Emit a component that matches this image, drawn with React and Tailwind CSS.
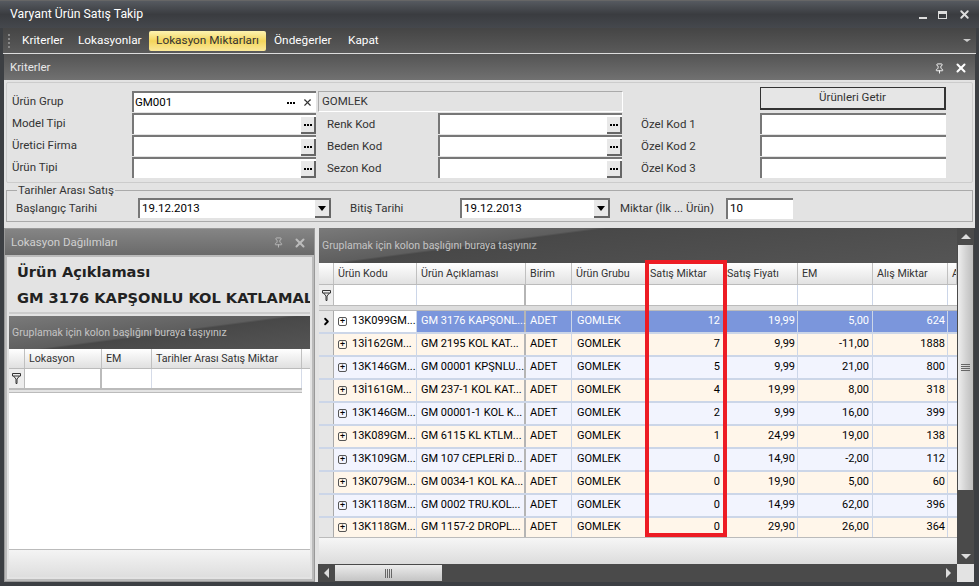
import React from "react";
import { ChevronRight, Pin, X } from "lucide-react";

const font = "font-['Roboto','Noto_Sans',sans-serif]";

const rows = [
  ["13K099GM...", "GM 3176 KAPŞONL...", "12", "19,99", "5,00", "624"],
  ["13İ162GM...", "GM 2195 KOL KAT...", "7", "9,99", "-11,00", "1888"],
  ["13K146GM...", "GM 00001 KPŞNLU...", "5", "9,99", "21,00", "800"],
  ["13İ161GM...", "GM 237-1 KOL KAT...", "4", "19,99", "8,00", "318"],
  ["13K146GM...", "GM 00001-1 KOL K...", "2", "9,99", "16,00", "399"],
  ["13K089GM...", "GM 6115 KL KTLM...", "1", "24,99", "19,00", "138"],
  ["13K109GM...", "GM 107 CEPLERİ D...", "0", "14,90", "-2,00", "112"],
  ["13K079GM...", "GM 0034-1 KOL KA...", "0", "19,90", "5,00", "60"],
  ["13K118GM...", "GM 0002 TRU.KOL...", "0", "14,99", "62,00", "396"],
  ["13K118GM...", "GM 1157-2 DROPL...", "0", "29,90", "26,00", "364"],
];

const Dots = () => (
  <span className="flex gap-[1px]">
    <i className="w-[2px] h-[2px] bg-black" />
    <i className="w-[2px] h-[2px] bg-black" />
    <i className="w-[2px] h-[2px] bg-black" />
  </span>
);

const Field = ({ value, lookup = true, className = "w-[184px]" }) => (
  <div className={`${className} h-[21px] bg-white border-t-2 border-l-2 border-t-[#777] border-l-[#777] flex items-end justify-between text-[11.5px] text-black pl-[1px]`}>
    <span>{value}</span>
    {lookup && (
      <span className="w-[15px] h-[17px] bg-[#e8e8e8] border-r-2 border-b-2 border-[#666] flex items-center justify-center">
        <Dots />
      </span>
    )}
  </div>
);

const DateField = ({ value, className }) => (
  <div className={`${className} h-[20px] bg-white border-t-2 border-l-2 border-t-[#777] border-l-[#777] flex items-center justify-between text-[11.5px] text-black pl-[2px]`}>
    <span>{value}</span>
    <span className="w-[16px] h-[18px] bg-[#e8e8e8] border-r-2 border-b-2 border-[#666] flex items-center justify-center">
      <i className="w-0 h-0 border-x-[4px] border-x-transparent border-t-[5px] border-t-black" />
    </span>
  </div>
);

const Label = ({ children, className = "" }) => (
  <span className={`${className} text-[11.5px] text-[#333] leading-[21px] whitespace-nowrap`}>{children}</span>
);

const PanelHead = ({ title, dim }) => (
  <div className={`h-[26px] shrink-0 flex items-center justify-between pl-[6px] pr-[7px] ${dim ? "pt-[1px] bg-gradient-to-b from-[#858585] to-[#6a6a6a] text-[#d0d0d0]" : "pt-[2px] bg-gradient-to-b from-[#545454] to-[#717171] text-[#e8e8e8]"} text-[11.5px]`}>
    <span>{title}</span>
    <span className="flex items-center gap-[9px]">
      <Pin size={11} strokeWidth={2} className={dim ? "text-[#bbb]" : "text-white"} />
      <X size={14} strokeWidth={3.5} className={dim ? "text-[#bbb]" : "text-white"} />
    </span>
  </div>
);

const Band = ({ className = "" }) => (
  <div className={`${className} shrink-0 flex items-end pl-[3px] text-[10.5px] leading-[14px] text-[#c4c4c4] bg-[linear-gradient(172.5deg,#7a7a7a_0,#5e5e5e_36px,#484848_38px,#555_100%)]`}>
    Gruplamak için kolon başlığını buraya taşıyınız
  </div>
);

const FilterIcon = () => (
  <svg width="9" height="11" viewBox="0 0 9 11" fill="none" stroke="#333" strokeWidth="1">
    <path d="M.5.5h8v2.500h-8zM1.500 3l2.500 3v4.500h1V6l2.500-3" />
  </svg>
);

const HCell = ({ children, className = "" }) => (
  <div className={`${className} h-full flex items-center pl-[4px] pt-[1px] border-r border-[#c0c0c0] text-[10.7px] text-[#333] whitespace-nowrap overflow-hidden`}>
    {children}
  </div>
);

const LocationPanel = () => (
  <section className="w-[311px] shrink-0 flex flex-col bg-[#e3e3e3] border border-[#999]">
    <PanelHead title="Lokasyon Dağılımları" dim />
    <div className="flex-1 flex flex-col px-[2px] pb-[2px] min-h-0 border-2 border-[#bbb]">
      <div className="h-[57px] shrink-0 pl-[8px] pt-[2px] overflow-hidden whitespace-nowrap border-b-2 border-[#ccc] font-['DejaVu_Sans',sans-serif] font-bold text-[#222]">
        <p className="text-[14.6px] leading-[26px]">Ürün Açıklaması</p>
        <p className="text-[14.6px] leading-[26px]">GM 3176 KAPŞONLU KOL KATLAMAL</p>
      </div>
      <div className="flex-1 flex flex-col mt-[2px] bg-white min-h-0">
        <Band className="h-[33px] pb-[9px]" />
        <div className="h-[20px] shrink-0 flex bg-gradient-to-b from-white to-[#e0e0e0] border-b border-[#bbb]">
          <HCell className="w-[16px]" />
          <HCell className="w-[77px]">Lokasyon</HCell>
          <HCell className="w-[50px]">EM</HCell>
          <HCell className="w-[150px]">Tarihler Arası Satış Miktar</HCell>
        </div>
        <div className="h-[21px] shrink-0 w-[293px] flex border-b-2 border-[#bbb]">
          <div className="w-[16px] bg-[#ededed] border-r border-[#bbb] flex items-center justify-center"><FilterIcon /></div>
          <div className="w-[77px] border-r-2 border-[#bbb]" />
          <div className="w-[50px] border-r border-[#d5dbe8]" />
          <div className="flex-1 border-r border-[#d5dbe8]" />
        </div>
        <div className="h-[3px] shrink-0 w-[293px] bg-[#e3e3e3] border-b border-[#bbb]" />
        <div className="flex-1" />
        <div className="h-[28px] shrink-0 bg-gradient-to-b from-[#f4f4f4] to-[#dedede] border-t border-[#bbb]" />
      </div>
    </div>
  </section>
);

const Grip = ({ vertical }) =>
  vertical ? (
    <>
      <i className="w-[9px] h-[1px] bg-[#666]" />
      <i className="w-[9px] h-[1px] bg-[#666]" />
      <i className="w-[9px] h-[1px] bg-[#666]" />
      <i className="w-[9px] h-[1px] bg-[#666]" />
    </>
  ) : (
    <>
      <i className="w-[1px] h-[9px] bg-[#666]" />
      <i className="w-[1px] h-[9px] bg-[#666]" />
      <i className="w-[1px] h-[9px] bg-[#666]" />
      <i className="w-[1px] h-[9px] bg-[#666]" />
    </>
  );

const Scroll = ({ horizontal }) =>
  horizontal ? (
    <div className="h-[18px] shrink-0 flex items-center bg-[#4a4a4a] ml-[1px]">
      <span className="w-[17px] flex justify-center"><i className="w-0 h-0 border-y-[5px] border-y-transparent border-r-[5px] border-r-[#ddd]" /></span>
      <div className="w-[107px] h-[16px] bg-gradient-to-b from-[#ececec] to-[#c4c4c4] flex items-center justify-center gap-[1px]">
        <Grip />
      </div>
      <span className="flex-1" />
      <span className="w-[17px] flex justify-center"><i className="w-0 h-0 border-y-[5px] border-y-transparent border-l-[5px] border-l-[#ddd]" /></span>
      <span className="w-[17px] h-full bg-[#e3e3e3]" />
    </div>
  ) : (
    <div className="w-[17px] shrink-0 flex flex-col bg-[#4a4a4a]">
      <span className="h-[17px] flex items-center justify-center"><i className="w-0 h-0 border-x-[5px] border-x-transparent border-b-[5px] border-b-[#ddd]" /></span>
      <div className="h-[245px] mx-[1px] bg-[linear-gradient(90deg,#eee,#d4d4d4_50%,#bdbdbd)] flex flex-col items-center justify-center gap-[1px]">
        <Grip vertical />
      </div>
      <span className="flex-1" />
      <span className="h-[16px] flex items-center justify-center"><i className="w-0 h-0 border-x-[5px] border-x-transparent border-t-[5px] border-t-[#ddd]" /></span>
    </div>
  );

const Row = ({ row, i }) => {
  const sel = i === 0;
  const last = i === rows.length - 1;
  const tint = sel ? "bg-[#7b96dc] text-white" : i % 2 ? "bg-[#fff6ea] text-black" : "bg-[#f2f4fe] text-black";
  const code = sel ? "bg-white text-black" : tint;
  return (
    <div className={`${last ? "h-[19px]" : "h-[23px] border-b-2 border-[#ccd6e8]"} shrink-0 flex text-[11px]`}>
      <div className="w-[15px] bg-[#e6e6e6] border-r border-[#aaa] flex items-center justify-center text-black">
        {sel && <ChevronRight size={11} strokeWidth={4} />}
      </div>
      <div className={`w-[83px] flex items-center gap-[5px] pl-[4px] border-r border-[#ccd6e8] whitespace-nowrap ${code}`}>
        <span className="w-[9px] h-[9px] shrink-0 border border-[#555] rounded-[2px] flex items-center justify-center text-[9px] leading-none">+</span>
        <span>{row[0]}</span>
      </div>
      <div className={`w-[109px] flex items-center pl-[4px] border-r-2 border-[#b5b5b5] whitespace-nowrap ${tint}`}>
        <span>{row[1]}</span>
      </div>
      <div className={`w-[46px] flex items-center pl-[4px] border-r border-[#ccd6e8] ${tint}`}>ADET</div>
      <div className={`w-[74px] flex items-center pl-[5px] border-r border-[#ccd6e8] ${tint}`}>GOMLEK</div>
      <div className={`w-[79px] flex items-center justify-end pr-[4px] border-r border-[#ccd6e8] ${tint}`}>{row[2]}</div>
      <div className={`w-[73px] flex items-center justify-end pr-[2px] border-r border-[#ccd6e8] ${tint}`}>{row[3]}</div>
      <div className={`w-[75px] flex items-center justify-end pr-[3px] border-r border-[#ccd6e8] ${tint}`}>{row[4]}</div>
      <div className={`w-[75px] flex items-center justify-end pr-[2px] border-r border-[#ccd6e8] ${tint}`}>{row[5]}</div>
      <div className={`flex-1 ${tint}`} />
    </div>
  );
};

const GridPanel = () => (
  <section className="flex-1 flex flex-col bg-[#e3e3e3] min-w-0 relative">
    <div className="flex-1 flex min-h-0">
      <div className="flex-1 flex flex-col min-w-0 pl-[2px]">
        <Band className="h-[35px] pb-[10px]" />
        <div className="h-[22px] flex shrink-0 bg-gradient-to-b from-white to-[#e2e2e2] border-b border-[#bbb]">
          <HCell className="w-[15px]" />
          <HCell className="w-[83px]">Ürün Kodu</HCell>
          <HCell className="w-[109px]">Ürün Açıklaması</HCell>
          <HCell className="w-[46px]">Birim</HCell>
          <HCell className="w-[74px]">Ürün Grubu</HCell>
          <HCell className="w-[79px]">Satış Miktar</HCell>
          <HCell className="w-[73px] !pl-[2px]">Satış Fiyatı</HCell>
          <HCell className="w-[75px]">EM</HCell>
          <HCell className="w-[75px]">Alış Miktar</HCell>
          <HCell className="flex-1">A</HCell>
        </div>
        <div className="h-[20px] flex shrink-0 bg-white">
          <div className="w-[15px] bg-[#ededed] border-r border-[#bbb] flex items-center justify-center"><FilterIcon /></div>
          <div className="w-[83px] border-r border-[#ccd6e8]" />
          <div className="w-[109px] border-r-2 border-[#b5b5b5]" />
          <div className="w-[46px] border-r border-[#ccd6e8]" />
          <div className="w-[74px] border-r border-[#ccd6e8]" />
          <div className="w-[79px] border-r border-[#ccd6e8]" />
          <div className="w-[73px] border-r border-[#ccd6e8]" />
          <div className="w-[75px] border-r border-[#ccd6e8]" />
          <div className="w-[75px] border-r border-[#ccd6e8]" />
        </div>
        <div className="h-[6px] shrink-0 bg-[#ddd] border-y border-[#bbb]" />
        {rows.map((row, i) => <Row key={i} row={row} i={i} />)}
        <div className="flex-1 bg-gradient-to-b from-[#f6f6f6] to-[#dcdcdc] border-t border-[#bbb]" />
      </div>
      <Scroll />
    </div>
    <Scroll horizontal />
    <div className="absolute left-[328px] top-[32px] w-[82px] h-[277px] border-[4px] border-[#ed1c24]" />
  </section>
);

const App = () => (
  <div className={`${font} w-[979px] h-[586px] overflow-hidden flex flex-col bg-[#3c3f43]`}>
    <header className="h-[28px] shrink-0 flex items-center justify-between pl-[10px] pr-[8px] bg-gradient-to-b from-[#565a60] via-[#3a3c40] to-[#45484d] text-[12.3px] text-white border-t border-[#666]">
      <span>Varyant Ürün Satış Takip</span>
      <span className="flex items-center gap-[11px] text-white">
        <i className="w-[8px] h-[2px] bg-[#ddd] mt-[6px]" />
        <i className="w-[9px] h-[8px] border border-t-[3px] border-[#ddd]" />
        <X size={13} strokeWidth={3.5} className="text-[#ddd]" />
      </span>
    </header>
    <div className="flex-1 flex flex-col px-[3px] min-h-0">
      <nav className="h-[26px] shrink-0 flex items-center bg-gradient-to-b from-[#454545] to-[#5a5a5a] border-b border-[#ddd] pl-[5px] pr-[3px] text-[11.8px] text-white whitespace-nowrap">
        <span className="w-[2px] h-[14px] mr-[5px] border-l-2 border-dotted border-[#888]" />
        <span className="w-[56px] pl-[7px]">Kriterler</span>
        <span className="w-[78px] pl-[7px]">Lokasyonlar</span>
        <span className="w-[117px] h-[20px] flex items-center justify-center rounded-[2px] text-[#333] bg-gradient-to-b from-[#fdf3b0] via-[#f3d55a] to-[#fbe99a]">Lokasyon Miktarları</span>
        <span className="w-[74px] pl-[8px]">Öndeğerler</span>
        <span className="pl-[8px]">Kapat</span>
        <i className="ml-auto mr-[2px] w-0 h-0 border-x-[4px] border-x-transparent border-t-[3px] border-t-[#ccc]" />
      </nav>
      <section className="shrink-0 mx-[1px] bg-[#e3e3e3] pb-[6px]">
        <PanelHead title="Kriterler" />
        <div className="mx-[2px] mt-[2px] h-[101px] border border-[#ccc] rounded-[2px] px-[5px] pt-[8px] grid grid-cols-[120px_186px_120px_185px_137px_186px] auto-rows-[22px]">
          <Label>Ürün Grup</Label>
          <div className="w-[184px] h-[21px] bg-white border-t-2 border-l-2 border-t-[#777] border-l-[#777] flex items-center justify-between text-[11.5px] text-black pl-[1px] pr-[3px]">
            <span>GM001</span>
            <span className="flex items-center gap-[7px]"><Dots /><X size={11} strokeWidth={2.5} className="text-[#333]" /></span>
          </div>
          <div className="col-span-3 w-[305px] h-[21px] border border-[#aaa] border-b-white border-r-white flex items-center text-[11.5px] text-[#333] pl-[3px]">GOMLEK</div>
          <button className="-mt-[4px] h-[23px] w-[186px] bg-[#e6e6e6] border border-[#333] border-b-2 border-r-2 text-[11.5px] text-[#333]">Ürünleri Getir</button>

          <Label>Model Tipi</Label><Field />
          <Label className="pl-[9px] pt-[1px]">Renk Kod</Label><Field />
          <Label className="pl-[18px] pt-[1px]">Özel Kod 1</Label><Field lookup={false} className="w-[186px]" />

          <Label>Üretici Firma</Label><Field />
          <Label className="pl-[9px] pt-[1px]">Beden Kod</Label><Field />
          <Label className="pl-[18px] pt-[1px]">Özel Kod 2</Label><Field lookup={false} className="w-[186px]" />

          <Label>Ürün Tipi</Label><Field />
          <Label className="pl-[9px] pt-[1px]">Sezon Kod</Label><Field />
          <Label className="pl-[18px] pt-[1px]">Özel Kod 3</Label><Field lookup={false} className="w-[186px]" />
        </div>
        <fieldset className="mx-[2px] mt-[1px] h-[38px] border border-[#aaa] pl-[9px] flex items-center">
          <legend className="ml-[1px] px-[1px] text-[11.5px] leading-[12px] text-[#333]">Tarihler Arası Satış</legend>
          <div className="flex items-center pb-[1px]">
            <Label className="w-[122px]">Başlangıç Tarihi</Label>
            <DateField value="19.12.2013" className="w-[193px]" />
            <Label className="w-[110px] pl-[19px] box-content">Bitiş Tarihi</Label>
            <DateField value="19.12.2013" className="w-[150px]" />
            <Label className="w-[116px] pl-[10px]">Miktar (İlk ... Ürün)</Label>
            <div className="w-[67px] h-[21px] bg-white border-t-2 border-l-2 border-t-[#777] border-l-[#777] flex items-center text-[11.5px] text-black pl-[2px]">10</div>
          </div>
        </fieldset>
      </section>
      <div className="flex-1 flex gap-[2px] mb-[4px] ml-[1px] mr-[2px] min-h-0 bg-[#e3e3e3]">
        <LocationPanel />
        <GridPanel />
      </div>
    </div>
  </div>
);

export default App;
